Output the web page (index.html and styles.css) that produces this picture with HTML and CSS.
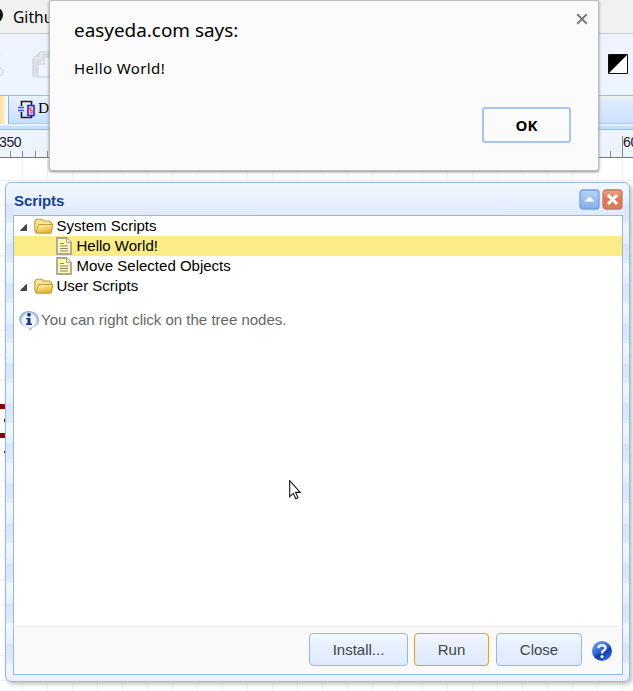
FILE: index.html
```html
<!DOCTYPE html>
<html lang="en">
<head>
<meta charset="utf-8">
<title>Scripts</title>
<link rel="stylesheet" href="styles.css">
</head>
<body>
<div class="app">
  <header class="menu"><span class="dot"></span><span>Github</span></header>
  <div class="toolbar">
    <svg class="tools" width="60" height="61" viewBox="0 0 60 61" fill="none" stroke="#dadee4" stroke-width="2">
      <path d="M-3 17L0 22M-1 34Q3 33 3 38Q3 42-2 42" stroke-width="1.5"/>
      <path d="M33 42V25L41 18H50V42Z" fill="#dadee4"/><path d="M35 24H41V19" stroke="#f7f9fc" stroke-width="1"/><path d="M38 43V30L44 23H52V43Z" fill="#edf4fe"/><path d="M38 30H44V24"/>
    </svg>
    <svg class="contrast" width="20" height="20" viewBox="0 0 20 20"><path d="M.5.5H19.5V19.5H.5Z" fill="#fff" stroke="#111"/><path d="M1 1H19L1 19Z"/></svg>
  </div>
  <div class="tabs">
    <div class="tab-current"></div>
    <div class="tab">
      <svg width="18" height="19" viewBox="0 0 18 19" fill="none"><path d="M3.5 6V1.5H13.5V5M3.5 12V17.5H13.5V15" stroke="#202026" stroke-width="1.7"/><path d="M0 7.5H6M0 10.5H6" stroke="#4b50e8" stroke-width="1.4"/><path d="M10 5.5H16V15.5H10Z" fill="#fbd9e2" stroke="#2525e5" stroke-width="1.6"/><path d="M14.5 8H12V10.5H14V13H11.5" stroke="#f04444" stroke-width="1.2"/></svg><span>Document</span>
    </div>
  </div>
  <div class="ruler"><span>350</span>
    <svg width="633" height="28" viewBox="0 0 633 28" stroke="#888"><path d="M10.5 21V28M22.5 21V28M35.5 21V28M47.5 21V28M610.5 21V28M622.5 6V28"/></svg>
    <span class="mark">600</span></div>
  <main class="canvas">
    <svg width="6" height="54" viewBox="0 0 6 54" fill="#8b0000"><path d="M0 0H6V5H0ZM4 15H6V18H4ZM0 29H6V34H0ZM4 47H6V49H4Z"/></svg>
  </main>
</div>

<section class="window">
  <div class="title"><h1>Scripts</h1>
    <svg class="tool" width="21" height="21" viewBox="0 0 21 21"><defs><linearGradient id="bl" x2="0" y2="1"><stop stop-color="#b8d3f8"/><stop offset="1" stop-color="#84aeea"/></linearGradient><linearGradient id="rd" x2="0" y2="1"><stop stop-color="#eba58c"/><stop offset=".5" stop-color="#dc7955"/><stop offset="1" stop-color="#d9805f"/></linearGradient></defs><rect x="1" y="1" width="19" height="19" rx="3" fill="url(#bl)" stroke="#719fdf" stroke-width="1.3"/><path d="M5.5 12.5L10.5 7.5L15.5 12.5Z" fill="#fff"/></svg>
    <svg class="tool" width="21" height="21" viewBox="0 0 21 21"><rect x="1" y="1" width="19" height="19" rx="3" fill="url(#rd)" stroke="#c7765c" stroke-width="1.3"/><path d="M6 6L15 15M15 6L6 15" stroke="#fff" stroke-width="3"/></svg>
  </div>
  <div class="body">
    <svg class="symbols" width="0" height="0"><defs>
      <linearGradient id="gold" x2=".4" y2="1"><stop stop-color="#fff5b8"/><stop offset="1" stop-color="#e9b62f"/></linearGradient>
      <symbol id="arrow" viewBox="0 0 9 9"><path d="M7.5 1.5V7.5H1.5Z" fill="#444" stroke="#444" stroke-linejoin="round"/></symbol>
      <symbol id="folder" viewBox="0 0 20 16"><path d="M2 14L.8 12V3.5L2.5 1.2H8L9.5 3H15.5L17.5 5V13L16.5 15H2Z" fill="#f8e494" stroke="#c39c3b" stroke-width="1.1"/><path d="M2 15L4.5 6.5H19L17 15Z" fill="url(#gold)" stroke="#c39c3b" stroke-width="1"/></symbol>
      <symbol id="file" viewBox="0 0 16 18"><path d="M1 1H10.5L15 5.5V17H1Z" fill="#fff9aa" stroke="#a6a69d" stroke-width="1.8"/><path d="M10.5 1V5.5H15" fill="#f0eee0" stroke="#a6a69d"/><path d="M4 6.5H8M4 9H12M4 11.5H12M4 14H12" stroke="#85867f" stroke-width="1.1"/></symbol>
    </defs></svg>
    <div class="row"><svg class="arrow"><use href="#arrow"/></svg><svg class="folder"><use href="#folder"/></svg><span>System Scripts</span></div>
    <div class="row child selected"><svg class="file"><use href="#file"/></svg><span>Hello World!</span></div>
    <div class="row child"><svg class="file"><use href="#file"/></svg><span>Move Selected Objects</span></div>
    <div class="row"><svg class="arrow"><use href="#arrow"/></svg><svg class="folder"><use href="#folder"/></svg><span>User Scripts</span></div>
    <div class="hint"><svg width="21" height="21" viewBox="0 0 21 21"><defs><radialGradient id="info"><stop stop-color="#fff"/><stop offset=".65" stop-color="#eef4fc"/><stop offset="1" stop-color="#7e9fd4"/></radialGradient></defs><path d="M8 17.5C-3 15-2 2 10 1C22 2 23 15 14 17.5L11.5 20.5Z" fill="url(#info)"/><circle cx="10" cy="4.8" r="1.9" fill="#14338d"/><path d="M7 8H11.5V13.5H13V15H7V13.5H8.5V9.3H7Z" fill="#14338d"/></svg><span>You can right click on the tree nodes.</span></div>
  </div>
  <footer><button class="install">Install...</button><button class="run">Run</button><button class="close-button">Close</button>
    <svg class="help" width="20" height="20" viewBox="0 0 20 20"><defs><linearGradient id="help" x1=".2" x2=".8" y2="1"><stop stop-color="#6c9bed"/><stop offset=".45" stop-color="#3268d0"/><stop offset=".6" stop-color="#123aa8"/><stop offset="1" stop-color="#3477e4"/></linearGradient></defs><circle cx="10" cy="10" r="10" fill="url(#help)"/><path d="M6.3 7.2Q6.5 4.2 10 4.2Q13.6 4.4 13.6 7.2Q13.2 8.8 11.4 9.8Q10 10.8 10 12.4" fill="none" stroke="#e8f1ff" stroke-width="2.4"/><circle cx="10" cy="15.4" r="1.5" fill="#fff"/></svg>
  </footer>
</section>

<section class="alert">
  <div class="alert-head"><h2>easyeda.com says:</h2><svg width="12" height="12" viewBox="0 0 12 12" stroke="#7b7b7b" stroke-width="2"><path d="M1.2 1.2L10.8 10.8M10.8 1.2L1.2 10.8"/></svg></div>
  <p>Hello World!</p>
  <button class="ok">OK</button>
</section>
<svg class="cursor" width="13" height="20" viewBox="0 0 13 20"><path d="M.7.7V16.8L4.3 13.4L6.8 18.7L9 17.7L6.6 12.4H11.3Z" fill="#fff" stroke="#15151d" stroke-width="1.1"/></svg>
</body>
</html>
```
FILE: styles.css
```css
* { box-sizing: border-box; }
body { margin: 0; width: 633px; height: 691px; overflow: hidden; position: relative; font: 15px "Liberation Sans", Arial, sans-serif; }
h1, h2, p { margin: 0; }
svg { display: block; flex: none; }
.app { height: 691px; display: flex; flex-direction: column; }
.menu { height: 34px; border-bottom: 1px solid #c5cad2; background: #f1f1f1; display: flex; align-items: center; font: 15.6px "Noto Sans", sans-serif; }
.dot { width: 16px; height: 16px; border-radius: 50%; background: #111; margin: -4px 10px 0 -13px; }
.toolbar { height: 62px; background: #edf4fe; border-bottom: 1px solid #9ebdde; display: flex; justify-content: space-between; }
.contrast { margin: 20px 5px 0 0; }
.tabs { height: 34px; border-bottom: 1px solid #95b8e4; background: linear-gradient(#f3f1e9, #dfecff 4px, #cbdfff 27px, #a9c6ed 27px, #a9c6ed 28px, #f2f7ff 28px, #f2f7ff 29px, #c9dfff 30px); display: flex; }
.tab-current { width: 9px; height: 28px; background: linear-gradient(90deg, #ffe0a0, #fff0c8 60%, #f5faff 65%); border-right: 1px solid #8eb2e2; }
.tab { width: 110px; height: 27px; display: flex; align-items: center; gap: 2px; padding: 0 0 0 9px; background: linear-gradient(#e9f2ff, #cadfff); font: 15.5px "Liberation Serif", serif; }
.tab span { margin-top: -3px; }
.ruler { height: 28px; border-bottom: 1px solid #777; background: #edf4fe; position: relative; flex: none; }
.ruler svg { position: absolute; left: 0; top: 0; }
.ruler span { position: absolute; left: -1px; top: 4px; font-size: 14px; letter-spacing: -.4px; color: #222; }
.ruler .mark { left: 623px; }
.canvas { flex: 1; padding-top: 246px; background: linear-gradient(90deg, #f0f0f0 1px, transparent 1px) 22px 0 / 25px 25px, linear-gradient(#f0f0f0 1px, transparent 1px) 0 22px / 25px 25px, #fff; }
.window { position: absolute; left: 5px; top: 182px; width: 625px; height: 500px; border: 1px solid #95b8e7; border-radius: 6px; padding: 0 6px 6px 7px; display: flex; flex-direction: column; background: repeating-linear-gradient(#f3f8ff 0, #e8f0ff 20px, #d9e5fd 21px, #e0eaff 40px); box-shadow: 2px 2px 4px #bbb; }
.title { height: 32px; display: flex; gap: 2px; align-items: center; background: linear-gradient(#f3f8ff, #e0eaff); }
.title h1 { flex: 1; font-size: 15px; line-height: 20px; color: #15428b; letter-spacing: -.1px; padding: 3px 0 0 1px; }
.body { flex: 1; background: #fff; border: 1px solid #95b8e7; border-bottom: 0; }
.symbols { position: absolute; }
.row { height: 20px; display: flex; align-items: center; padding-left: 5px; color: #000; }
.row span { margin-top: -2px; }
.arrow { width: 9px; height: 9px; margin: 3px 6px 0 0; }
.folder { width: 20px; height: 16px; margin-right: 2.5px; }
.child { padding-left: 42px; }
.file { width: 16px; height: 18px; margin-right: 4.5px; }
.selected { background: #fbec88; }
.hint { height: 24px; margin-top: 12px; padding: 0 0 0 5px; display: flex; align-items: center; gap: 1px; color: #666; }
.hint span { margin-top: -1px; }
footer { height: 49px; background: #fafafa; border: 1px solid #95b8e7; border-top-color: #eee; display: flex; align-items: flex-start; justify-content: flex-end; padding: 6px 10px 0 0; }
button { font: 15px "Liberation Sans", sans-serif; padding: 0; color: #444; height: 33px; border: 1px solid #95b8e7; border-radius: 4px; background: linear-gradient(#f4f8ff, #e6efff 40%, #dfeaff); }
.install { width: 99px; }
.run { width: 75px; margin: 0 7px 0 6px; border-color: #ff9c00; }
.close-button { width: 86px; }
.help { margin: 8px 0 0 10px; }
.alert { position: absolute; left: 49px; top: 0; width: 550px; height: 171px; background: #fbfbfb; border: 1px solid #bcbcbc; border-radius: 2px 2px 3px 3px; box-shadow: 0 1px 3px #888; padding: 12px 10px 0 24px; font-family: "Noto Sans", sans-serif; display: flex; flex-direction: column; }
.alert-head { display: flex; justify-content: space-between; height: 34px; }
.alert h2 { font-size: 18.9px; font-weight: 400; line-height: 34px; }
.alert p { font-size: 15px; line-height: 20px; margin-top: 11px; letter-spacing: .4px; }
.alert .ok { align-self: flex-end; margin: 29px 17px 0; width: 89px; height: 36px; border: 2px solid #a9c3f5; border-radius: 3px; background: #fbfbfb; color: #000; font: bold 15px "Open Sans", sans-serif; padding-bottom: 1px; }
.cursor { position: absolute; left: 289px; top: 480px; }
```
